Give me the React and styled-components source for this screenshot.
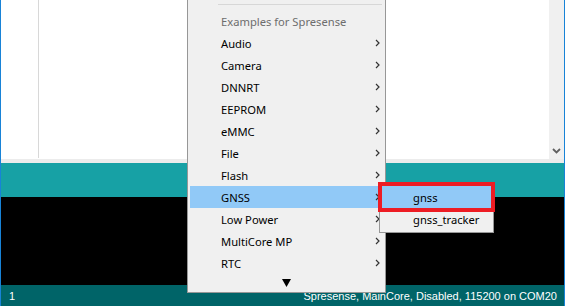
import React from "react";
import styled, { createGlobalStyle } from "styled-components";

const Global = createGlobalStyle`
  html, body { margin: 0; padding: 0; }
  body { width: 565px; height: 306px; overflow: hidden; background: #fff; }
  #root { width: 565px; height: 306px; }
  * { box-sizing: border-box; }
`;

const Window = styled.div`
  position: relative;
  width: 565px;
  height: 306px;
  border-left: 1px solid #1883d7;
  border-right: 1px solid #1883d7;
  display: flex;
  flex-direction: column;
  overflow: hidden;
  font-family: "Liberation Sans", Arial, sans-serif;
`;

const Editor = styled.div`
  height: 159px;
  display: flex;
  background: #fff;
`;

const Gutter = styled.div`
  width: 38px;
  border-right: 1px solid #d8d8d8;
  margin-bottom: 1px;
`;

const Code = styled.div`
  flex: 1;
`;

const Scrollbar = styled.div`
  width: 15px;
  background: #f0f0f0;
  display: flex;
  flex-direction: column;
  justify-content: flex-end;
  align-items: center;
  padding-bottom: 5px;
`;

const Strip = styled.div`
  height: 4px;
  background: #ececec;
`;

const Toolbar = styled.div`
  height: 34px;
  background: #17a1a5;
`;

const Console = styled.div`
  flex: 1;
  background: #000;
`;

const Status = styled.div`
  height: 21px;
  background: #006468;
  color: #fff;
  font-size: 11px;
  display: flex;
  align-items: center;
  justify-content: space-between;
  padding: 0 7px 0 8px;
`;

const Menu = styled.div`
  position: absolute;
  left: 186px;
  top: 0;
  width: 199px;
  height: 293px;
  background: #f0f0f0;
  border: 1px solid #979797;
  border-top: none;
  padding: 4px 2px 0 2px;
  display: flex;
  flex-direction: column;
  font-family: "Noto Sans", "Open Sans", sans-serif;
  font-size: 11.2px;
`;

const Separator = styled.div`
  height: 1px;
  flex: none;
  background: #d7d7d7;
  margin: 0 1px 5px 28px;
`;

const Item = styled.div`
  height: 22px;
  flex: none;
  display: flex;
  align-items: center;
  justify-content: space-between;
  padding: 0 3px 0 31px;
  color: ${(p) => (p.$muted ? "#6d6d6d" : "#000")};
  background: ${(p) => (p.$active ? "#91c9f7" : "transparent")};
`;

const MoreRow = styled.div`
  height: 18px;
  display: flex;
  justify-content: center;
  align-items: center;
`;

const SubMenu = styled.div`
  position: absolute;
  left: 378px;
  top: 183px;
  width: 115px;
  background: #f0f0f0;
  border: 1px solid #979797;
  padding: 2px;
  display: flex;
  flex-direction: column;
  font-family: "Noto Sans", "Open Sans", sans-serif;
  font-size: 11.2px;
`;

const Highlight = styled.div`
  position: absolute;
  left: 377px;
  top: 182px;
  width: 117px;
  height: 30px;
  border: 4px solid #ed1c24;
`;

const Chevron = () => (
  <svg width="5" height="8" viewBox="0 0 5 8">
    <path d="M1 1 L4 4 L1 7" fill="none" stroke="#333" strokeWidth="1.2" />
  </svg>
);

const DownChevron = () => (
  <svg width="9" height="6" viewBox="0 0 9 6">
    <path d="M1 1 L4.5 4.5 L8 1" fill="none" stroke="#606060" strokeWidth="1.8" />
  </svg>
);

const items = [
  "Audio",
  "Camera",
  "DNNRT",
  "EEPROM",
  "eMMC",
  "File",
  "Flash",
  "GNSS",
  "Low Power",
  "MultiCore MP",
  "RTC",
];

export default function App() {
  return (
    <>
      <Global />
      <Window>
        <Editor>
          <Gutter />
          <Code />
          <Scrollbar>
            <DownChevron />
          </Scrollbar>
        </Editor>
        <Strip />
        <Toolbar />
        <Console />
        <Status>
          <span>1</span>
          <span>Spresense, MainCore, Disabled, 115200 on COM20</span>
        </Status>
        <Menu>
          <Separator />
          <Item $muted>Examples for Spresense</Item>
          {items.map((name) => (
            <Item key={name} $active={name === "GNSS"}>
              <span>{name}</span>
              <Chevron />
            </Item>
          ))}
          <MoreRow>
            <svg width="9" height="8" viewBox="0 0 9 8">
              <path d="M0 0 H9 L4.5 8 Z" fill="#000" />
            </svg>
          </MoreRow>
        </Menu>
        <SubMenu>
          <Item $active>gnss</Item>
          <Item>gnss_tracker</Item>
        </SubMenu>
        <Highlight />
      </Window>
    </>
  );
}
